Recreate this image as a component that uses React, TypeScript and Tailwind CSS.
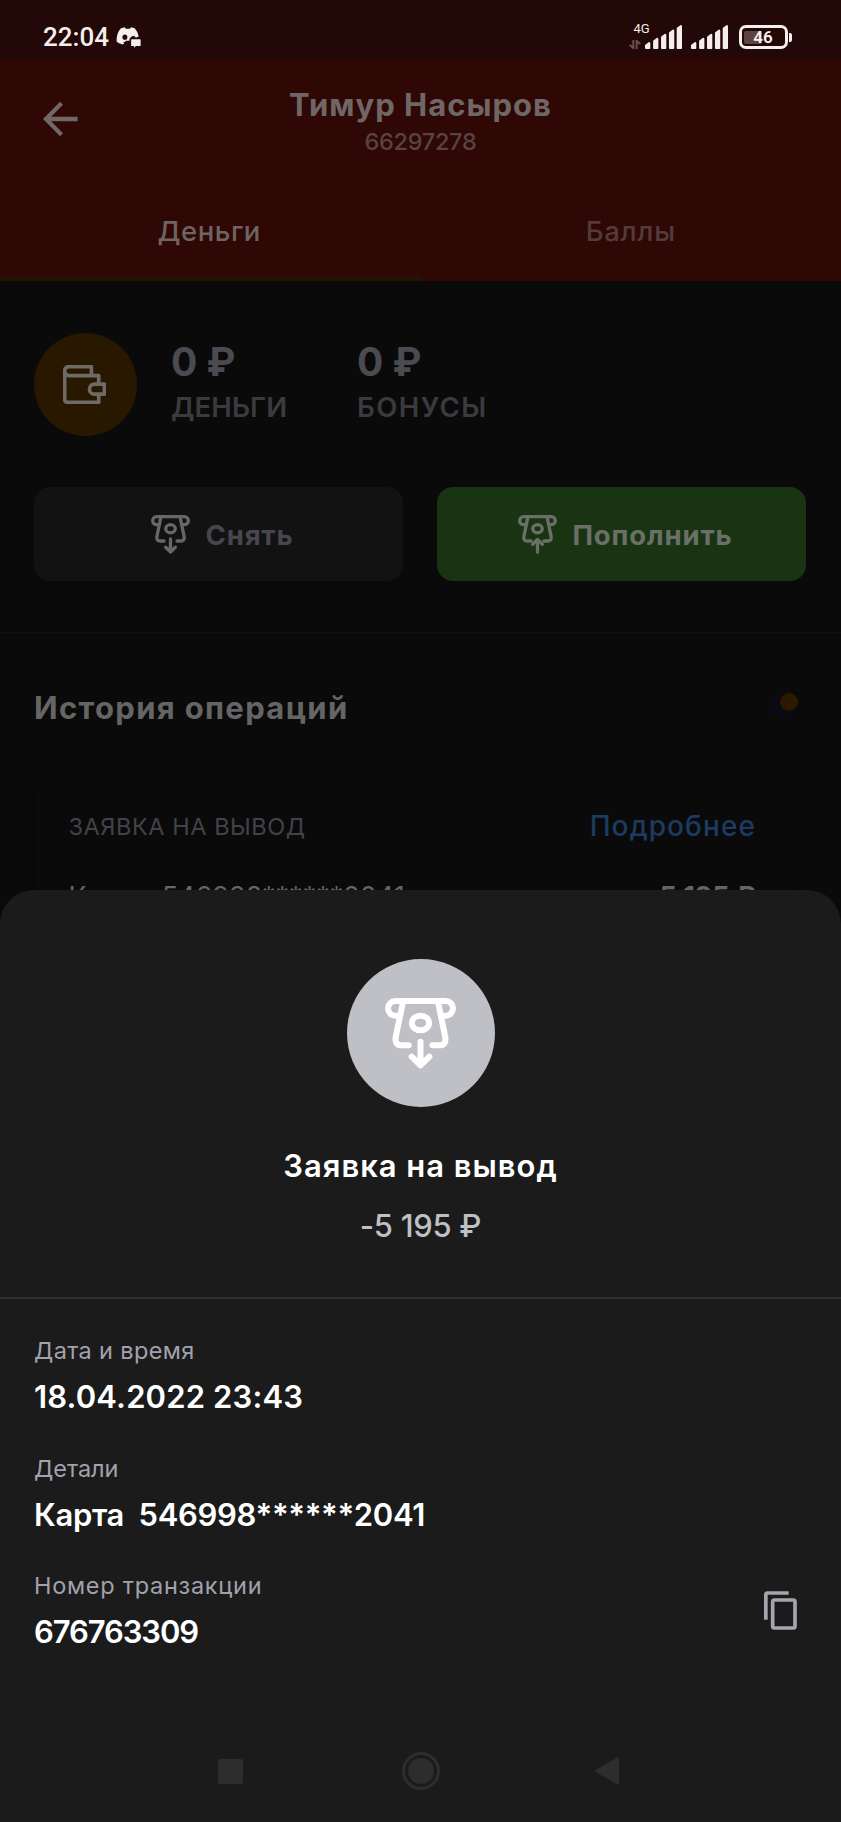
import React from 'react';

const BAR_OFFSETS = [0, 24.5, 48.5, 72.5, 96];
const BAR_TOPS = [51, 38, 26, 13, 0];

const SignalIcon: React.FC = () => (
  <svg viewBox="0 0 112 72" className="h-6 w-[37px]" fill="#f5eeed">
    {BAR_OFFSETS.map((x, i) => (
      <path key={x} d={`M${x} ${BAR_TOPS[i] + 9} L${x + 12} ${BAR_TOPS[i]} Q${x + 16} ${BAR_TOPS[i]} ${x + 16} ${BAR_TOPS[i] + 4} V69 q0 3 -3 3 H${x + 3} q-3 0 -3 -3 Z`} />
    ))}
  </svg>
);

const DiscordIcon: React.FC = () => (
  <svg viewBox="0 0 76 64" className="ml-[7px] h-[21px] w-[25px]" fill="#f5eeed">
    <path
      fillRule="evenodd"
      d="M15 4 L26 1 L30 5 H42 L46 1 L57 4 Q67 15 69 29 L60 33 A8 8 0 0 0 46 31 Q41 33 41 37 V42 H30 L27 46 L22 46 L25 50 L20 53 Q8 50 2 45 Q0 20 15 4 Z M27 23 A7.500 8 0 1 0 27 39 A7.500 8 0 1 0 27 23 Z"
    />
    <path d="M48 37 H73 q2 0 2 2 V56 q0 2 -2 2 H60 L56 63 L54 58 H48 q-2 0 -2 -2 V39 q0 -2 2 -2 Z" />
  </svg>
);

const BatteryIcon: React.FC = () => (
  <div className="flex items-center gap-[1.500px]">
    <div className="relative flex h-6 w-[49px] items-center justify-center rounded-[7px] border-3 border-[#f5eeed]">
      <div className="absolute left-[2.500px] top-[2.500px] h-[13px] w-[18px] rounded-[2px] bg-[#5f4341]" />
      <span className="relative text-[17px] font-semibold leading-none text-[#f8f2f1]">46</span>
    </div>
    <div className="h-[9px] w-[3px] rounded-r-[2px] bg-[#f5eeed]" />
  </div>
);

const CashIcon: React.FC<{ direction: 'up' | 'down'; className: string }> = ({ direction, className }) => (
  <svg
    viewBox="0 0 213 213"
    className={className}
    fill="none"
    stroke="currentColor"
    strokeWidth="18"
    strokeLinecap="round"
    strokeLinejoin="round"
  >
    <path d="M42 53 H31 a22 22 0 0 1 0 -44 H182 a22 22 0 0 1 0 44 H171" />
    <path d="M54 12 L32 118 q-3 24 18 24 H71" />
    <path d="M159 12 L181 118 q3 24 -18 24 H142" />
    <ellipse cx="106.5" cy="75" rx="26" ry="22" />
    {direction === 'down' ? (
      <path d="M106.500 131 V202 M80 176 L106.500 202 L133 176" />
    ) : (
      <path d="M106.500 203 V135 M80 160 L106.500 134 L133 160" />
    )}
  </svg>
);

const WalletIcon: React.FC = () => (
  <svg viewBox="191 194 130 118" className="mr-0.5 h-[39px] w-[43px]" fill="none" stroke="#6f6a64" strokeWidth="11" strokeLinejoin="round">
    <path d="M299 252 V226 H209 q-13 0 -13 -13 q0 -14 14 -14 H277 V226 M196 212 V298 q0 9 9 9 H299 V282" />
    <path d="M316 252 H286 a15 15 0 0 0 0 30 H316 Z" />
  </svg>
);

const CopyIcon: React.FC = () => (
  <svg viewBox="133 93 99 117" className="h-[39px] w-[33px]" fill="none" stroke="#a5a4af" strokeWidth="11">
    <path d="M138.500 179 V104 q0 -5 5 -5 H207" />
    <rect x="159" y="120" width="67" height="84" rx="5" />
  </svg>
);

const StatusBar: React.FC = () => (
  <div className="flex h-[59px] items-center bg-[#220806] pl-[43px] pr-[49px] pt-[15px] font-[Roboto,sans-serif]">
    <span className="text-[26px] font-medium leading-[44px] text-[#f5eeed]">22:04</span>
    <DiscordIcon />
    <div className="ml-auto flex items-center">
      <div className="flex h-[26px] w-[21px] flex-col">
        <span className="pl-[5px] text-[13px] leading-[10px] text-[#f5eeed]">4G</span>
        <svg viewBox="0 0 36 27" className="mt-[6px] h-[9px] w-3" fill="none" stroke="#6b504d" strokeWidth="6">
          <path d="M13 0 V24 L2 15 M23 27 V3 L34 12" />
        </svg>
      </div>
      <div className="-ml-[5px] flex gap-[9px]">
        <SignalIcon />
        <SignalIcon />
      </div>
      <div className="ml-[11px]">
        <BatteryIcon />
      </div>
    </div>
  </div>
);

const Header: React.FC = () => (
  <header className="flex h-[222px] flex-col bg-[#2f0705]">
    <div className="grid grid-cols-[120px_1fr_120px]">
      <div className="pl-[42.5px] pt-[43px]">
        <svg viewBox="128 305 104 103" className="h-[34px] w-[35px]" fill="none" stroke="#706867" strokeWidth="13">
          <path d="M232 356.500 H136 M183 309 L136 356.500 L183 404" />
        </svg>
      </div>
      <div className="pt-[26px] text-center">
        <h1 className="text-[31px] font-bold leading-[40px] tracking-[1px] text-[#6f6766]">Тимур Насыров</h1>
        <p className="text-[23.5px] font-medium leading-[34px] tracking-[-0.3px] text-[#594341]">66297278</p>
      </div>
    </div>
    <div className="mt-auto grid grid-cols-2 text-center text-[27.5px] font-medium leading-[42px]">
      <div className="h-[71px] border-b-[5px] border-[#231300] pr-[2px] tracking-[0.5px] text-[#6e6463]">Деньги</div>
      <div className="tracking-[0.7px] text-[#523b3a]">Баллы</div>
    </div>
  </header>
);

const Balance: React.FC = () => (
  <section className="pl-[34px] pr-[35px] pt-[52px]">
    <div className="flex items-center">
      <div className="flex size-[103px] items-center justify-center rounded-full bg-[#291800]">
        <WalletIcon />
      </div>
      <div className="ml-[34px] w-[186px]">
        <p className="text-[39px] font-bold leading-[46px] tracking-[-1px] [word-spacing:2px] text-[#4b4a51]">0 ₽</p>
        <p className="text-[27.5px] font-semibold leading-[45px] tracking-[0.1px] text-[#3b3b3f]">ДЕНЬГИ</p>
      </div>
      <div>
        <p className="text-[39px] font-bold leading-[46px] tracking-[-1px] [word-spacing:2px] text-[#4b4a51]">0 ₽</p>
        <p className="text-[27.5px] font-semibold leading-[45px] tracking-[1.45px] text-[#3b3b3f]">БОНУСЫ</p>
      </div>
    </div>
    <div className="mt-[51px] grid grid-cols-2 gap-[34px] text-[27.5px] font-bold tracking-[0.85px]">
      <button className="flex h-[94px] items-center justify-center gap-[15px] rounded-2xl bg-[#121212] pl-2 text-[#47464c]">
        <CashIcon direction="down" className="size-[39px] text-[#676767]" />
        <span className="pt-1">Снять</span>
      </button>
      <button className="flex h-[94px] items-center justify-center gap-[15px] rounded-2xl bg-[#193413] pl-2 text-[#6a7067]">
        <CashIcon direction="up" className="size-[39px] text-[#6a7067]" />
        <span className="pt-1">Пополнить</span>
      </button>
    </div>
  </section>
);

const History: React.FC = () => (
  <section className="mt-[51px] border-t border-[#101010] px-[34px] pt-[55px]">
    <div className="flex items-start justify-between">
      <h2 className="text-[31px] font-bold leading-[40px] tracking-[1.33px] text-[#656565]">История операций</h2>
      <div className="relative mr-[9px] size-9">
        <svg viewBox="0 0 36 36" className="size-9" fill="#0a0a10">
          <path d="M4 29 Q8 26 8 16 Q9 6 19 5 Q28 6 29 16 Q29 26 34 29 Z M15 31 H23 Q22 35 19 35 Q16 35 15 31 Z" />
        </svg>
        <div className="absolute right-0 top-[5px] size-[18px] rounded-full bg-[#2c1900]" />
      </div>
    </div>
    <div className="mt-[48px] mr-[14px] h-[200px] rounded-xl pl-[34.5px] pr-[37px] pt-[30px] shadow-[0_4px_6px_#090909]">
      <div className="flex justify-between leading-[40px]">
        <span className="pt-px text-[23.5px] tracking-[0.55px] text-[#434249]">ЗАЯВКА НА ВЫВОД</span>
        <span className="text-[28px] font-medium tracking-[1.1px] text-[#1d3b60]">Подробнее</span>
      </div>
      <div className="mt-[30px] flex justify-between text-[27px] leading-[40px] text-[#656565]">
        <span className="[word-spacing:8px]">Карта 546998******2041</span>
        <span className="font-bold">-5 195 ₽</span>
      </div>
    </div>
  </section>
);

const Field: React.FC<{ label: string; value: string; valueClass: string; labelClass: string }> = ({
  label,
  value,
  valueClass,
  labelClass,
}) => (
  <div className="h-[117.5px]">
    <p className={`text-[23.5px] leading-[36px] text-[#a2a1ae] ${labelClass}`}>{label}</p>
    <p className={`mt-[6px] text-[31px] font-semibold leading-[44px] text-white ${valueClass}`}>{value}</p>
  </div>
);

const NavBar: React.FC = () => (
  <div className="mt-auto grid h-[102px] grid-cols-[1fr_38px_1fr] items-center">
    <div className="ml-[217.5px] size-[25px] rounded-[2px] bg-[#2d2d2d]" />
    <div className="flex size-[38px] items-center justify-center rounded-full border-3 border-[#2d2d2d]">
      <div className="size-[26px] rounded-full bg-[#2d2d2d]" />
    </div>
    <svg viewBox="0 0 24 28" className="ml-[155.5px] h-7 w-6" fill="#2d2d2d">
      <path d="M0.500 13 L22 0.500 Q24 0 24 2 V26 Q24 28 22 27.500 L0.500 15 Q-0.500 14 0.500 13 Z" />
    </svg>
  </div>
);

const OperationSheet: React.FC = () => (
  <div className="absolute inset-x-0 bottom-0 flex h-[932px] flex-col rounded-t-[34px] bg-[#1b1b1b]">
    <div className="flex h-[409px] flex-col items-center border-b-2 border-[#303030] pt-[69px]">
      <div className="flex size-[148px] items-center justify-center rounded-full bg-[#bfbfc6]">
        <CashIcon direction="down" className="size-[71px] text-white" />
      </div>
      <h3 className="mt-[39px] text-[31px] font-semibold leading-[40px] tracking-[0.98px] text-white">Заявка на вывод</h3>
      <p className="mt-[20px] text-[31px] font-medium leading-[40px] tracking-[-0.3px] text-[#bfbfc6]">-5 195 ₽</p>
    </div>
    <div className="flex items-center justify-between pl-[34px] pr-[44px] pt-[34px]">
      <div>
        <Field label="Дата и время" value="18.04.2022 23:43" labelClass="tracking-[0.38px]" valueClass="tracking-[0.15px]" />
        <Field
          label="Детали"
          value="Карта 546998******2041"
          labelClass=""
          valueClass="tracking-[-0.35px] [word-spacing:7px]"
        />
        <Field label="Номер транзакции" value="676763309" labelClass="tracking-[0.72px]" valueClass="tracking-[-1.1px]" />
      </div>
      <button className="mt-[203px]">
        <CopyIcon />
      </button>
    </div>
    <NavBar />
  </div>
);

export default function App() {
  return (
    <div className="relative flex h-[1822px] w-[841px] flex-col overflow-hidden bg-[#0a0a0a] font-[Inter,sans-serif]">
      <StatusBar />
      <Header />
      <Balance />
      <History />
      <OperationSheet />
    </div>
  );
}
